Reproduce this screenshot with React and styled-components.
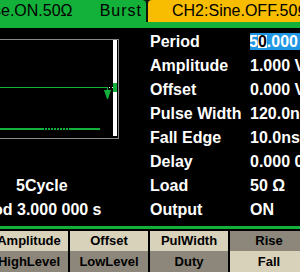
import React from 'react';
import styled, { createGlobalStyle } from 'styled-components';

const GREEN = '#14b13a';
const YELLOW = '#f8bc00';
const BLUE = '#2196e2';
const LIGHT = '#d8d2ba';
const DARK = '#8c877a';

const params = [
  { label: 'Period', value: '50.000 000ms', active: true },
  { label: 'Amplitude', value: '1.000 Vpp' },
  { label: 'Offset', value: '0.000 Vdc' },
  { label: 'Pulse Width', value: '120.0ns' },
  { label: 'Fall Edge', value: '10.0ns' },
  { label: 'Delay', value: '0.000 000 000s' },
  { label: 'Load', value: '50 Ω' },
  { label: 'Output', value: 'ON' },
];

// each soft key column: top label, bottom label, which one is lit
const softKeys = [
  { top: 'Amplitude', bottom: 'HighLevel', lit: 'top' },
  { top: 'Offset', bottom: 'LowLevel', lit: 'top' },
  { top: 'PulWidth', bottom: 'Duty', lit: 'top' },
  { top: 'Rise', bottom: 'Fall', lit: 'bottom' },
];

const App = () => {
  return (
    <>
      <GlobalStyle />
      <Screen>
        <Header>
          <Tabs>
            <ChannelTab>
              <span>se.ON.50Ω</span>
              <Mode>Burst</Mode>
            </ChannelTab>
            <OtherTab>CH2:Sine.OFF.50Ω</OtherTab>
          </Tabs>
        </Header>

        <Body>
          <LeftPanel>
            <Wave />
            <InfoLine $indent={16}>5Cycle</InfoLine>
            <InfoLine $indent={-7}>od 3.000 000 s</InfoLine>
          </LeftPanel>

          <ParamList>
            {params.map(p => (
              <ParamRow key={p.label}>
                <Label>{p.label}</Label>
                {p.active ?
                  <Value>
                    <Editing>
                      5<Cursor>0</Cursor>.000 000ms
                    </Editing>
                  </Value> :
                  <Value>{p.value}</Value>
                }
              </ParamRow>
            ))}
          </ParamList>
        </Body>

        <Divider />

        <SoftKeys>
          {softKeys.map(k => (
            <KeyColumn key={k.top}>
              <Key $light={k.lit === 'top'}>{k.top}</Key>
              <Key $light={k.lit === 'bottom'} $tall>{k.bottom}</Key>
            </KeyColumn>
          ))}
        </SoftKeys>
      </Screen>
    </>
  );
};

const Wave = () => (
  <svg width="150" height="112" viewBox="0 0 150 112">
    {/* grid frame */}
    <line x1="0" y1="11.5" x2="119" y2="11.5" stroke="#8a8a8a" />
    <line x1="118.5" y1="11" x2="118.5" y2="111" stroke="#8a8a8a" />
    <line x1="0" y1="110.5" x2="119" y2="110.5" stroke="#8a8a8a" />
    <rect x="113" y="12" width="4" height="96" fill="#fff" />
    <rect x="113" y="55" width="4" height="9" fill={GREEN} />
    {/* level trace + trigger marker */}
    <line x1="0" y1="59.5" x2="108" y2="59.5" stroke={GREEN} />
    <rect x="107" y="59" width="1" height="4" fill={GREEN} />
    <polygon points="104,62 111,62 108,71 107,71" fill={GREEN} />
    <rect x="109" y="59" width="1" height="1" fill="#fff" />
    <rect x="112" y="59" width="1" height="1" fill="#fff" />
    {/* burst bar */}
    <line x1="0" y1="101" x2="42" y2="101" stroke={GREEN} strokeWidth="2" />
    <line x1="42" y1="101" x2="70" y2="101" stroke={GREEN} strokeWidth="2" strokeDasharray="2 1" />
    <line x1="70" y1="101" x2="100" y2="101" stroke={GREEN} strokeWidth="2" />
  </svg>
);

export default App;

const GlobalStyle = createGlobalStyle`
  html, body {
    margin: 0;
    padding: 0;
    background: #000;
  }
  * {
    box-sizing: border-box;
  }
`;

const Screen = styled.div`
  width: 300px;
  height: 272px;
  overflow: hidden;
  background: #000;
  color: #fff;
  font-family: "Liberation Sans", Arial, sans-serif;
  display: flex;
  flex-direction: column;
`;

const Header = styled.div`
  height: 28px;
  background: ${GREEN};
  flex-shrink: 0;
`;

const Tabs = styled.div`
  height: 22px;
  display: flex;
  gap: 2px;
  background: #0c1a0e;
  font-size: 16px;
  line-height: 22px;
  color: #000;
  white-space: nowrap;
`;

const ChannelTab = styled.div`
  flex: 0 0 146px;
  background: ${GREEN};
  border-top-right-radius: 4px;
  display: flex;
  justify-content: space-between;
  padding-right: 4px;
  overflow: hidden;

  span:first-child {
    margin-left: -7px;
  }
`;

const Mode = styled.span`
  letter-spacing: 1px;
`;

const OtherTab = styled.div`
  flex: 1;
  background: ${YELLOW};
  border-top-left-radius: 4px;
  padding-left: 24px;
  overflow: hidden;
`;

const Body = styled.div`
  height: 198px;
  display: flex;
  flex-shrink: 0;
`;

const LeftPanel = styled.div`
  flex: 0 0 150px;
  display: flex;
  flex-direction: column;
  overflow: hidden;

  svg {
    display: block;
    margin-bottom: 34px;
  }
`;

const InfoLine = styled.div`
  font-size: 16px;
  font-weight: bold;
  line-height: 24px;
  white-space: nowrap;
  margin-left: ${props => props.$indent}px;
`;

const ParamList = styled.div`
  flex: 1;
  padding-top: 2px;
`;

const ParamRow = styled.div`
  display: grid;
  grid-template-columns: 100px 1fr;
  height: 24px;
  font-size: 16px;
  font-weight: bold;
  line-height: 24px;
  white-space: nowrap;
`;

const Label = styled.span``;

const Value = styled.span`
  overflow: hidden;
`;

const Editing = styled.span`
  display: inline-block;
  background: ${BLUE};
  border-radius: 7px 0 0 7px;
  margin-left: -5px;
  padding-left: 4px;
  line-height: 17px;
`;

const Cursor = styled.span`
  display: inline-block;
  background: #fff;
  color: #000;
  line-height: 13px;
`;

const Divider = styled.div`
  height: 3px;
  margin-bottom: 2px;
  background: ${GREEN};
  flex-shrink: 0;
`;

const SoftKeys = styled.div`
  flex: 1;
  display: grid;
  grid-template-columns: repeat(4, 78px);
  column-gap: 2px;
  margin-left: -10px;
`;

const KeyColumn = styled.div`
  display: flex;
  flex-direction: column;
`;

const Key = styled.div`
  height: ${props => (props.$tall ? 21 : 20)}px;
  background: ${props => (props.$light ? LIGHT : DARK)};
  color: #000;
  font-size: 13px;
  font-weight: bold;
  line-height: ${props => (props.$tall ? 21 : 20)}px;
  text-align: center;
  white-space: nowrap;
`;
